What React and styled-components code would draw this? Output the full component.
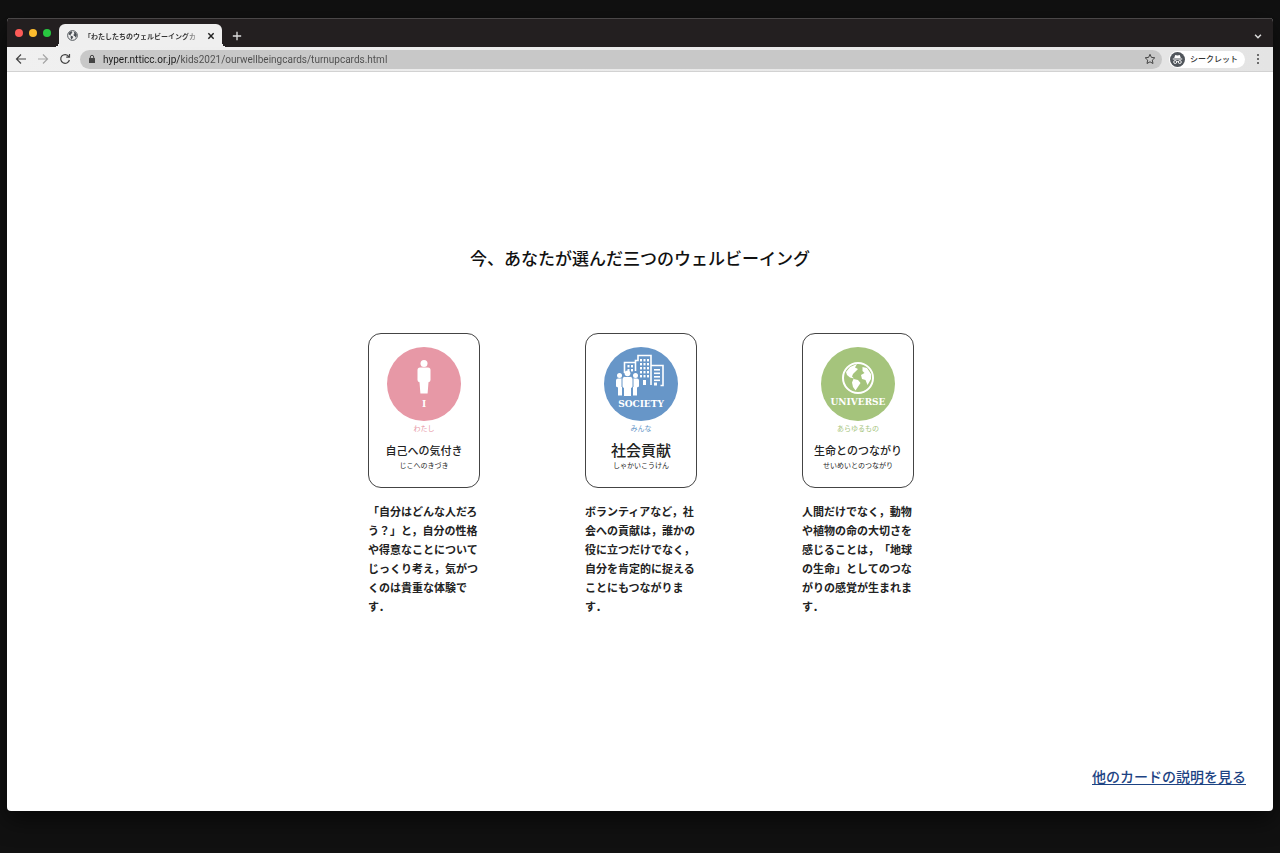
import React, { useState } from 'react';
import styled, { createGlobalStyle } from 'styled-components';

const GlobalStyle = createGlobalStyle`
  * {
    box-sizing: border-box;
  }

  body {
    margin: 0;
    background: #111;
    color: #111;
    font-family: "Noto Sans CJK JP", sans-serif;
    text-spacing-trim: space-all;
  }

  button {
    padding: 0;
    border: 0;
    background: none;
    color: inherit;
    font: inherit;
    cursor: pointer;
  }
`;

const Desktop = styled.div`
  display: flex;
  min-height: 100vh;
  padding: 18px 7px 42px;
`;

const Window = styled.div`
  flex: 1;
  min-width: 0;
  display: flex;
  flex-direction: column;
  border-radius: 4px;
  overflow: hidden;
  background: #fff;
  box-shadow: 0 8px 24px rgba(0, 0, 0, 0.6);
`;

const TabStrip = styled.div`
  display: flex;
  align-items: flex-end;
  height: 29px;
  padding: 0 9px 0 8px;
  background: #231f20;
  border-top: 1px solid #4a4748;
`;

const Lights = styled.div`
  display: flex;
  align-items: center;
  gap: 6px;
  height: 28px;
  padding-right: 8px;
`;

const Light = styled.button`
  width: 8px;
  height: 8px;
  border-radius: 50%;
  background: ${(props) => props.$color};
`;

const Tab = styled.div`
  position: relative;
  display: flex;
  align-items: center;
  gap: 6px;
  width: 163px;
  height: 23px;
  padding: 0 7px 0 8px;
  border-radius: 6px 6px 0 0;
  background: #efefef;

  &::before,
  &::after {
    content: "";
    position: absolute;
    bottom: 0;
    width: 5px;
    height: 5px;
  }

  &::before {
    right: 100%;
    background: radial-gradient(circle at 0 0, transparent 5px, #efefef 5px);
  }

  &::after {
    left: 100%;
    background: radial-gradient(circle at 100% 0, transparent 5px, #efefef 5px);
  }
`;

const TabTitle = styled.span`
  flex: 1;
  overflow: hidden;
  white-space: nowrap;
  font-size: 7px;
  line-height: 12px;
  font-weight: 700;
  color: #333;
  mask-image: linear-gradient(to right, #000 86%, transparent);
`;

const IconButton = styled.button`
  display: flex;
  align-items: center;
  justify-content: center;
  width: ${(props) => props.$width || 12}px;
  height: ${(props) => props.$height || 12}px;
  color: ${(props) => props.$color || '#444'};
`;

const Spacer = styled.div`
  flex: 1;
`;

const Toolbar = styled.div`
  display: flex;
  align-items: center;
  height: 25px;
  padding: 0 9px 0 8px;
  background: linear-gradient(to right, #f0f0f0, #e4e4e4);
  border-bottom: 1px solid #d2d2d2;
`;

const NavButtons = styled.div`
  display: flex;
  gap: 10px;
  padding-right: 9px;
`;

const AddressBar = styled.label`
  flex: 1;
  display: flex;
  align-items: center;
  gap: 6px;
  height: 19px;
  padding: 0 6px 0 7px;
  border-radius: 10px;
  background: #c8c8c8;
  color: #444;
`;

const AddressInput = styled.input`
  flex: 1;
  min-width: 0;
  padding: 1px 0 0;
  border: 0;
  outline: none;
  font-family: Roboto, sans-serif;
  font-size: 10px;
  line-height: 14px;
  color: transparent;
  background: linear-gradient(to right, #1c1c1c 78px, #4c4c4c 78px);
  background-clip: text;
`;

const Incognito = styled.button`
  display: flex;
  align-items: center;
  gap: 5px;
  height: 17px;
  margin: 0 7px;
  padding: 0 7px 0 1px;
  border-radius: 9px;
  background: #fff;
  font-size: 8px;
  line-height: 12px;
  font-weight: 500;
  color: #333;
`;

const Page = styled.main`
  flex: 1;
  display: flex;
  flex-direction: column;
  align-items: center;
  padding: 172px 27px 25px;
`;

const Title = styled.h1`
  margin: 0 0 62px;
  font-size: 17px;
  line-height: 27px;
  font-weight: 500;
`;

const CardList = styled.ul`
  display: flex;
  gap: 105px;
  margin: 0;
  padding: 0 0 0 2px;
  list-style: none;
`;

const CardItem = styled.li`
  width: 112px;
`;

const Card = styled.div`
  display: flex;
  flex-direction: column;
  align-items: center;
  height: 155px;
  padding-top: 13px;
  border: 1px solid #444;
  border-radius: 13px;
  white-space: nowrap;
`;

const Badge = styled.div`
  display: flex;
  flex-direction: column;
  align-items: center;
  width: 74px;
  height: 74px;
  margin-bottom: 1px;
  border-radius: 50%;
  background: ${(props) => props.$color};
  color: #fff;
`;

const BadgeLabel = styled.span`
  font-family: "DejaVu Serif", serif;
  font-size: 9px;
  line-height: 15px;
  font-weight: 700;
`;

const Reading = styled.p`
  margin: 0;
  font-size: 7px;
  line-height: 12px;
  color: ${(props) => props.$color || '#222'};
`;

const CardName = styled.h2`
  margin: 7px 0 0;
  font-size: ${(props) => (props.$large ? 15 : 11)}px;
  line-height: 18px;
  font-weight: 500;
  color: #222;
`;

const Description = styled.p`
  margin: 14px 0 0;
  font-size: 11px;
  line-height: 19px;
  font-weight: 700;
  color: #222;
`;

const MoreLink = styled.a`
  align-self: flex-end;
  margin-top: auto;
  font-size: 14px;
  line-height: 20px;
  font-weight: 500;
  color: #1d4383;
  text-underline-offset: 2px;
`;

const Stroke = ({ size = 12, width = 1.2, children }) => (
  <svg width={size} height={size} viewBox="0 0 12 12" fill="none" stroke="currentColor" strokeWidth={width} aria-hidden="true">
    {children}
  </svg>
);

const land = (
  <>
    <path d="M-12-6L-8-11L-1-14L-3-10.500L0-9L-3-6L-5-4L-6-1.500L-4 .5L-8-.5L-11-3Z" />
    <path d="M-4.500 1L0 2L2.500 5L.5 8L-2.500 12.500L-5 9L-6 4.500Z" />
    <path d="M4.500-11L9-10L13-4L13 1L9.500 7L7.500 2L4 1L3-3L6.500-5L4.500-7Z" />
  </>
);

const Globe = ({ size, color = '#4a4f55' }) => (
  <svg width={size} height={size} viewBox="-17 -17 34 34" fill={color} aria-hidden="true">
    <circle r="15" fill="none" stroke={color} strokeWidth="3" />
    {land}
  </svg>
);

const SelfArt = () => (
  <svg width="74" height="50" viewBox="0 0 74 50" fill="#fff" aria-hidden="true">
    <circle cx="37" cy="16.4" r="3.5" />
    <path d="M33 20.500h8q2.500 0 2.500 2.500v10q0 2-2 2.200L40.600 46.500h-7.200L32.500 35.200q-2-.2-2-2.200v-10q0-2.500 2.500-2.500z" />
  </svg>
);

const SocietyArt = () => (
  <svg width="74" height="50" viewBox="0 0 74 50" fill="#fff" aria-hidden="true">
    <path
      d="M20.500 26V15.500H31M31.500 24V13.500H34V8.500H47V38M47 18.500H59V38.500H56.500"
      fill="none"
      stroke="#fff"
      strokeWidth="1.6"
    />
    {[12, 16, 20, 24, 28].map((y) =>
      [36, 39.5, 43].map((x) => <rect key={`${x}-${y}`} x={x} y={y} width="2" height="2.400" />)
    )}
    {[18, 22].map((y) => [23.5, 27].map((x) => <rect key={`${x}-${y}`} x={x} y={y} width="2" height="2.400" />))}
    {[22, 25.500, 29, 32.500].map((y) => (
      <rect key={y} x="50" y={y} width="6" height="1.600" />
    ))}
    <rect x="39" y="33" width="3" height="5" />
    <rect x="50" y="35.500" width="3" height="3" />
    <circle cx="15.500" cy="28.500" r="2.500" />
    <circle cx="31.500" cy="28.500" r="2.500" />
    <path d="M14 31.500h4v17h-4v-8l-2-1v-6q0-2 2-2zM33 31.500h-4v17h4v-8l2-1v-6q0-2-2-2z" />
    <path
      d="M20.500 29.500h6q2.500 0 2.500 2.500v8l-1.500 1v8.500h-8v-8.500l-1.500-1v-8q0-2.500 2.500-2.500z"
      stroke="#6796c8"
      strokeWidth="1"
    />
    <circle cx="23.500" cy="26.300" r="2.900" />
  </svg>
);

const UniverseArt = () => (
  <svg width="74" height="48" viewBox="0 0 74 48" fill="#fff" aria-hidden="true">
    <circle cx="37" cy="31" r="15" fill="none" stroke="#fff" strokeWidth="2" />
    <g transform="translate(37 31)">{land}</g>
  </svg>
);

const cards = [
  {
    label: 'I',
    color: '#e798a6',
    art: <SelfArt />,
    group: 'わたし',
    name: '自己への気付き',
    reading: 'じこへのきづき',
    text: '「自分はどんな人だろう？」と，自分の性格や得意なことについてじっくり考え，気がつくのは貴重な体験です．',
  },
  {
    label: 'SOCIETY',
    color: '#6796c8',
    art: <SocietyArt />,
    group: 'みんな',
    name: '社会貢献',
    large: true,
    reading: 'しゃかいこうけん',
    text: 'ボランティアなど，社会への貢献は，誰かの役に立つだけでなく，自分を肯定的に捉えることにもつながります．',
  },
  {
    label: 'UNIVERSE',
    color: '#a5c47c',
    art: <UniverseArt />,
    group: 'あらゆるもの',
    name: '生命とのつながり',
    reading: 'せいめいとのつながり',
    text: '人間だけでなく，動物や植物の命の大切さを感じることは，「地球の生命」としてのつながりの感覚が生まれます．',
  },
];

const App = () => {
  const [url, setUrl] = useState('hyper.ntticc.or.jp/kids2021/ourwellbeingcards/turnupcards.html');

  return (
    <>
      <GlobalStyle />
      <Desktop lang="ja">
        <Window>
          <TabStrip>
            <Lights>
              <Light $color="#fc5b57" aria-label="閉じる" />
              <Light $color="#fdbc2e" aria-label="しまう" />
              <Light $color="#28c840" aria-label="拡大" />
            </Lights>
            <Tab>
              <Globe size={11} />
              <TabTitle>「わたしたちのウェルビーイングカ</TabTitle>
              <IconButton $width={8} $color="#222" aria-label="タブを閉じる">
                <Stroke size={8} width={2.2}>
                  <path d="M2 2l8 8M10 2l-8 8" />
                </Stroke>
              </IconButton>
            </Tab>
            <IconButton $width={30} $height={23} $color="#ddd" aria-label="新しいタブ">
              <Stroke size={10} width={1.6}>
                <path d="M6 1v10M1 6h10" />
              </Stroke>
            </IconButton>
            <Spacer />
            <IconButton $height={23} $color="#ddd" aria-label="タブを検索">
              <Stroke size={10} width={1.8}>
                <path d="M2.500 4.500L6 8l3.500-3.500" />
              </Stroke>
            </IconButton>
          </TabStrip>

          <Toolbar>
            <NavButtons>
              <IconButton aria-label="戻る">
                <Stroke>
                  <path d="M11 6H1.500M6 1.500L1.500 6L6 10.500" />
                </Stroke>
              </IconButton>
              <IconButton $color="#a5a5a5" aria-label="進む">
                <Stroke>
                  <path d="M1 6h9.500M6 1.500L10.500 6L6 10.500" />
                </Stroke>
              </IconButton>
              <IconButton aria-label="再読み込み">
                <Stroke>
                  <path d="M9.800 3.500A4.400 4.400 0 1 0 10.400 7M10.500 1v3.200H7.200" />
                </Stroke>
              </IconButton>
            </NavButtons>
            <AddressBar>
              <svg width="10" height="10" viewBox="0 0 10 10" aria-hidden="true">
                <rect x="2" y="4" width="6" height="5" rx="0.500" fill="currentColor" />
                <path d="M3.300 4.500V3a1.700 1.700 0 0 1 3.400 0v1.500" fill="none" stroke="currentColor" />
              </svg>
              <AddressInput
                type="text"
                aria-label="アドレス"
                value={url}
                onChange={(e) => setUrl(e.target.value)}
              />
              <IconButton aria-label="ブックマーク">
                <Stroke width={1}>
                  <path d="M6 1.300l1.400 3.100 3.400.4-2.500 2.300.7 3.400-3-1.700-3 1.700.7-3.400L1.200 4.800l3.400-.4z" />
                </Stroke>
              </IconButton>
            </AddressBar>
            <Incognito>
              <svg width="15" height="15" viewBox="0 0 15 15" aria-hidden="true">
                <circle cx="7.500" cy="7.500" r="7.500" fill="#50555b" />
                <path d="M5.200 3l2.300.5L9.800 3l1 3h-6.600zM2.800 6.500h9.400v1H2.800z" fill="#fff" />
                <g fill="none" stroke="#fff" strokeWidth="0.900">
                  <circle cx="5.200" cy="10" r="1.500" />
                  <circle cx="9.800" cy="10" r="1.500" />
                  <path d="M6.700 9.800q.8-.6 1.600 0" />
                </g>
              </svg>
              シークレット
            </Incognito>
            <IconButton aria-label="メニュー">
              <svg width="12" height="12" viewBox="0 0 12 12" fill="currentColor" aria-hidden="true">
                <circle cx="6" cy="2" r="1" />
                <circle cx="6" cy="6" r="1" />
                <circle cx="6" cy="10" r="1" />
              </svg>
            </IconButton>
          </Toolbar>

          <Page>
            <Title>今、あなたが選んだ三つのウェルビーイング</Title>
            <CardList>
              {cards.map((card) => (
                <CardItem key={card.label}>
                  <Card>
                    <Badge $color={card.color}>
                      {card.art}
                      <BadgeLabel>{card.label}</BadgeLabel>
                    </Badge>
                    <Reading $color={card.color}>{card.group}</Reading>
                    <CardName $large={card.large}>{card.name}</CardName>
                    <Reading>{card.reading}</Reading>
                  </Card>
                  <Description>{card.text}</Description>
                </CardItem>
              ))}
            </CardList>
            <MoreLink href="#cards">他のカードの説明を見る</MoreLink>
          </Page>
        </Window>
      </Desktop>
    </>
  );
};

export default App;
